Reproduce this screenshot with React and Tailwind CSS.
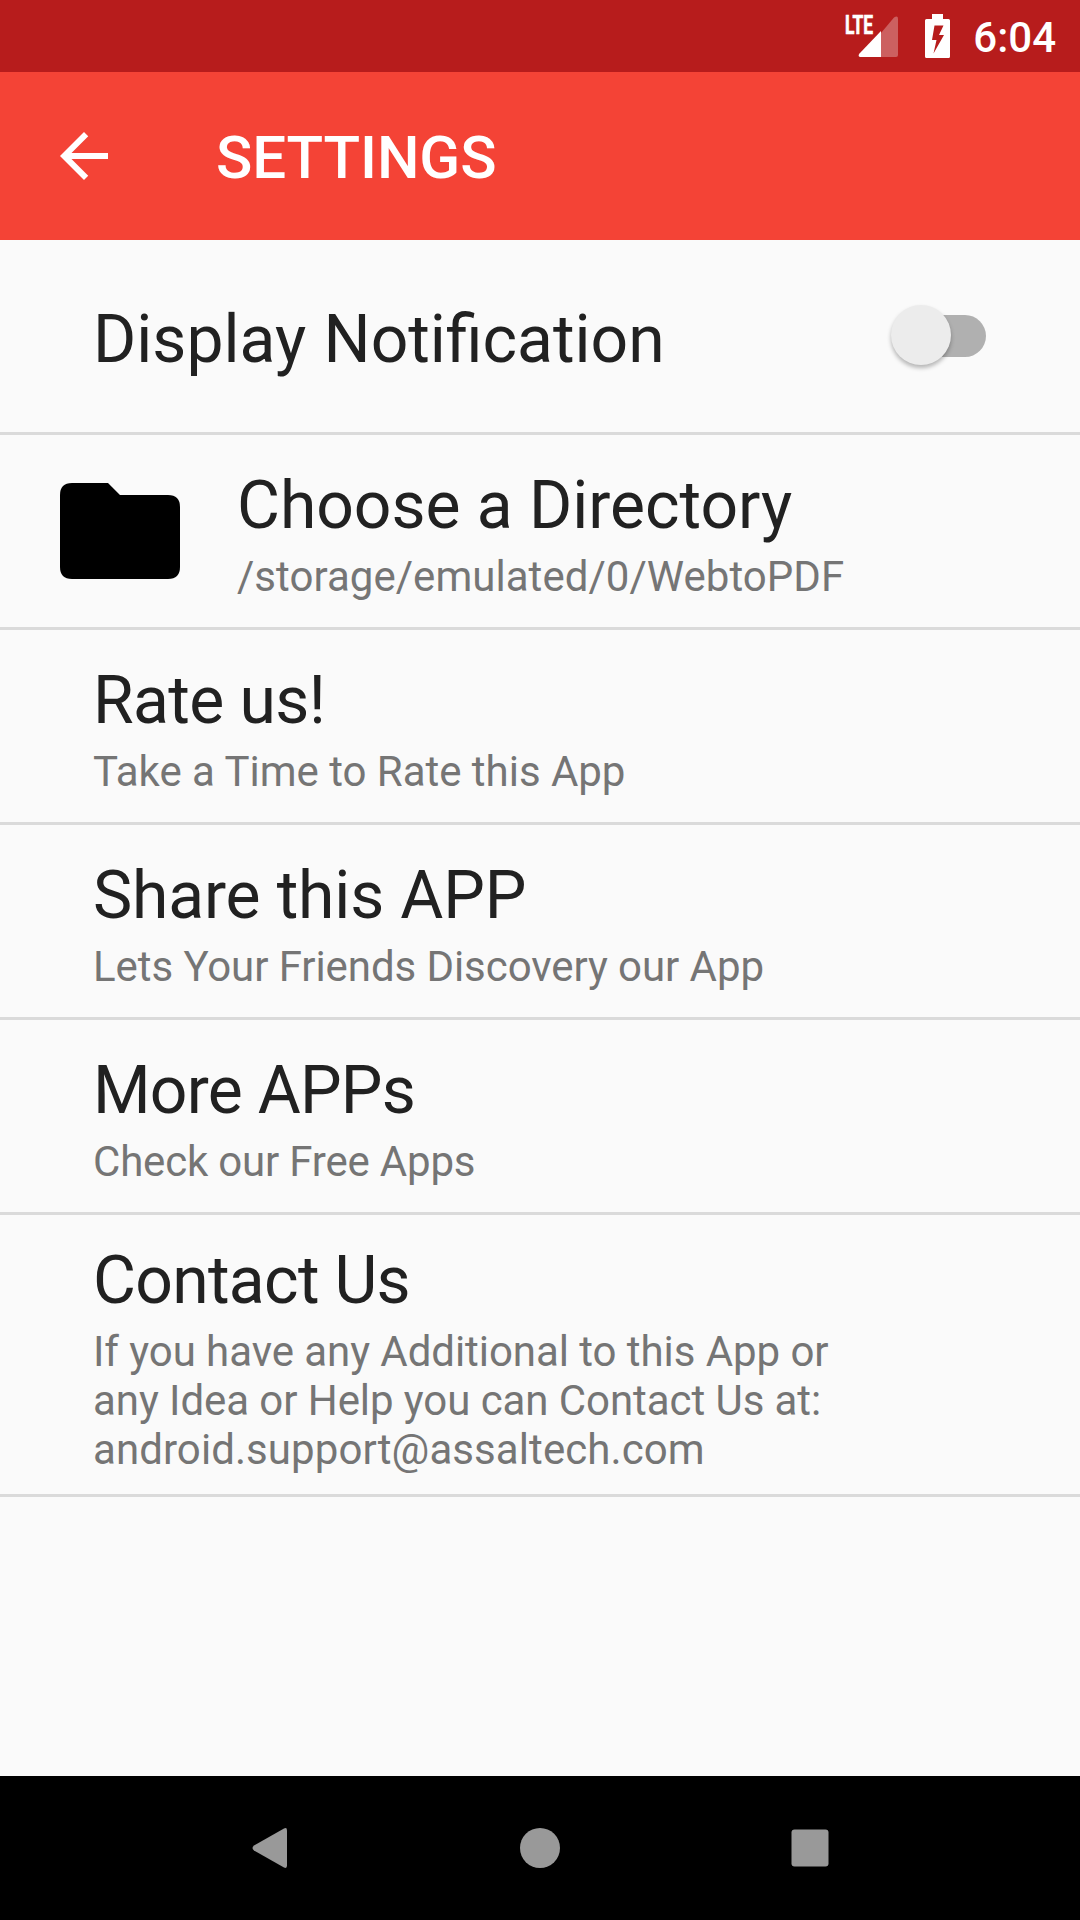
import React, { useState } from "react";

const items = [
  {
    title: "Choose a Directory",
    tracking: "tracking-[-0.03px]",
    lines: [{ text: "/storage/emulated/0/WebtoPDF", tracking: "tracking-[0.04px]" }],
    folder: true,
  },
  {
    title: "Rate us!",
    tracking: "tracking-[-0.6px]",
    lines: [{ text: "Take a Time to Rate this App", tracking: "tracking-[-0.02px]" }],
  },
  {
    title: "Share this APP",
    tracking: "tracking-[-0.15px]",
    lines: [{ text: "Lets Your Friends Discovery our App", tracking: "tracking-[-0.07px]" }],
  },
  {
    title: "More APPs",
    tracking: "tracking-[-0.75px]",
    lines: [{ text: "Check our Free Apps", tracking: "tracking-[-0.19px]" }],
  },
  {
    title: "Contact Us",
    tracking: "tracking-[-0.7px]",
    lines: [
      { text: "If you have any Additional to this App or", tracking: "tracking-[-0.06px]" },
      { text: "any Idea or Help you can Contact Us at:", tracking: "tracking-[-0.07px]" },
      { text: "android.support@assaltech.com", tracking: "tracking-[0.08px]" },
    ],
  },
];

function StatusBar() {
  return (
    <div className="flex h-[72px] shrink-0 items-start justify-end bg-[#b71c1c] pr-6 text-white">
      <svg className="h-[72px] w-[60px]" viewBox="0 0 60 72">
        <path d="M53 17.600 Q57 15 57 19 V55 Q57 57 55 57 H40 V33 Z" fill="#fff" fillOpacity=".3" />
        <path d="M40 31 V57 H19 Q16.500 56 18.500 53.500 Z" fill="#fff" />
        <text
          x="4"
          y="33.500"
          fill="#fff"
          stroke="#fff"
          strokeWidth=".7"
          fontFamily="Roboto"
          fontWeight="700"
          fontSize="26"
          textLength="28"
          lengthAdjust="spacingAndGlyphs"
        >
          LTE
        </text>
      </svg>
      <svg className="ml-6 h-[72px] w-[26px]" viewBox="0 0 26 72">
        <path
          fill="#fff"
          fillRule="evenodd"
          d="M7 14 H18 V19 H23.500 Q25 19 25 20.500 V56.500 Q25 58 23.500 58 H1.500 Q0 58 0 56.500 V20.500 Q0 19 1.500 19 H7 Z M9.500 25.500 L7 40 H11.500 L8.500 53.500 L19 35 H14 L18.500 25.500 Z"
        />
      </svg>
      <span className="ml-[22px] pt-[13px] text-[42px] leading-[49px] font-medium">6:04</span>
    </div>
  );
}

function AppBar() {
  return (
    <div className="flex h-[168px] shrink-0 items-center bg-[#f44336] pl-12 text-white">
      <svg className="size-[72px]" viewBox="0 0 24 24" fill="currentColor">
        <path d="M20 11H7.830l5.590-5.590L12 4l-8 8 8 8 1.410-1.410L7.830 13H20v-2z" />
      </svg>
      <h1 className="ml-24 pt-1 text-[60px] leading-[70px] font-medium tracking-[-0.1px]">SETTINGS</h1>
    </div>
  );
}

function Switch({ checked, onChange }) {
  return (
    <button
      type="button"
      role="switch"
      aria-checked={checked}
      onClick={() => onChange(!checked)}
      className={`flex h-[42px] w-[88px] items-center rounded-full bg-[#b0b0b0] ${checked ? "justify-end" : ""}`}
    >
      <span className="mb-0.5 -ml-[7px] size-[60px] shrink-0 rounded-full bg-[#ececec] shadow-[0_3px_4px_rgba(0,0,0,0.28)]" />
    </button>
  );
}

function FolderIcon() {
  return (
    <svg className="mt-12 h-24 w-[120px] shrink-0" viewBox="0 0 120 96">
      <path d="M12 0H48L60 12H108Q120 12 120 24V84Q120 96 108 96H12Q0 96 0 84V12Q0 0 12 0Z" />
    </svg>
  );
}

function SettingRow({ title, tracking, lines, folder }) {
  return (
    <div
      className={`flex border-b-[3px] border-[#dadada] ${folder ? "gap-[57px] pl-[60px]" : "pl-[93px]"} ${
        lines.length > 1 ? "h-[282px]" : "h-[195px]"
      }`}
    >
      {folder && <FolderIcon />}
      <div className={lines.length > 1 ? "pt-[27px]" : "pt-8"}>
        <h2 className={`text-[66px] leading-[78px] text-[#212121] ${tracking}`}>{title}</h2>
        <div className="mt-[7px] text-[42px] leading-[49px] text-[#757575]">
          {lines.map((line) => (
            <p key={line.text} className={line.tracking}>
              {line.text}
            </p>
          ))}
        </div>
      </div>
    </div>
  );
}

function NavBar() {
  return (
    <div className="flex h-36 shrink-0 items-center justify-center gap-[230px] bg-black">
      <svg className="size-10" viewBox="0 0 40 40" fill="#999">
        <path d="M34 .5Q37 -1 37 2.500V37.500Q37 41 34 39.500L4 22.500Q1 20 4 17.500Z" />
      </svg>
      <svg className="size-10" viewBox="0 0 40 40" fill="#999">
        <circle cx="20" cy="20" r="20" />
      </svg>
      <svg className="size-10" viewBox="0 0 40 40" fill="#999">
        <rect x="1.500" y="1.500" width="37" height="37" rx="3" />
      </svg>
    </div>
  );
}

export default function App() {
  const [notify, setNotify] = useState(false);

  return (
    <div className="flex h-[1920px] w-[1080px] flex-col overflow-hidden bg-[#fafafa] font-[Roboto,sans-serif]">
      <StatusBar />
      <AppBar />
      <main className="flex-1">
        <div className="flex h-[195px] items-center justify-between border-b-[3px] border-[#dadada] pr-[94px] pl-[93px]">
          {/* word spacing keeps the "fi" ligature, letter spacing would break it */}
          <h2 className="pt-2 text-[66px] leading-[78px] [word-spacing:1px] text-[#212121]">Display Notification</h2>
          <Switch checked={notify} onChange={setNotify} />
        </div>
        {items.map((item) => (
          <SettingRow key={item.title} {...item} />
        ))}
      </main>
      <NavBar />
    </div>
  );
}
